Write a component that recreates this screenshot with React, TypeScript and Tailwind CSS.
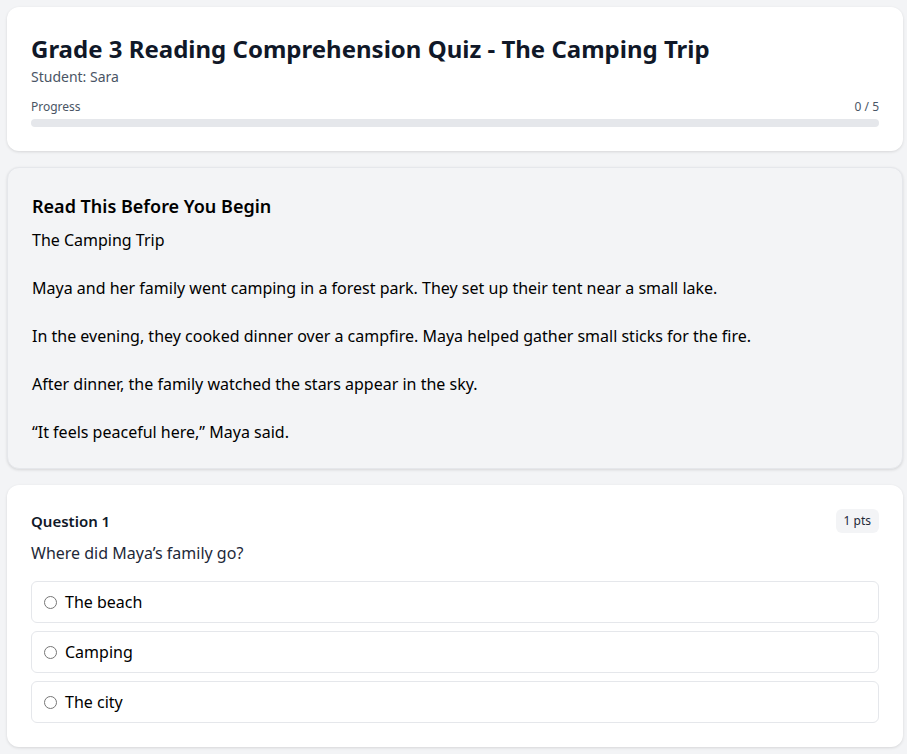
const passage = `The Camping Trip

Maya and her family went camping in a forest park. They set up their tent near a small lake.

In the evening, they cooked dinner over a campfire. Maya helped gather small sticks for the fire.

After dinner, the family watched the stars appear in the sky.

“It feels peaceful here,” Maya said.`;

const options = ['The beach', 'Camping', 'The city'];

export default function App() {
  return (
    <div
      className="min-h-screen bg-[#f3f4f6] pt-[7px] pr-[4px] pb-2 pl-[7px] text-gray-900"
      style={{ fontFamily: '"Noto Sans", "Open Sans", sans-serif' }}
    >
      <div className="flex flex-col gap-4">
        <div className="rounded-xl bg-white p-6 shadow-[0_1px_3px_rgba(0,0,0,0.12)]">
          <h1 className="text-2xl leading-9 font-bold text-gray-900">
            Grade 3 Reading Comprehension Quiz - The Camping Trip
          </h1>
          <p className="text-sm leading-5 text-gray-600">Student: Sara</p>
          <div className="mt-3">
            <div className="flex justify-between text-xs leading-4 text-gray-600">
              <span>Progress</span>
              <span>0 / 5</span>
            </div>
            <div className="mt-1 h-2 rounded-full bg-gray-200" />
          </div>
        </div>

        <div className="rounded-xl border border-gray-200 bg-[#f3f4f6] p-6 shadow-[0_1px_3px_rgba(0,0,0,0.12)]">
          <h2 className="text-lg leading-7 font-semibold text-black">Read This Before You Begin</h2>
          <p className="mt-2 text-base leading-6 whitespace-pre-line text-black">{passage}</p>
        </div>

        <div className="rounded-xl bg-white p-6 shadow-[0_1px_3px_rgba(0,0,0,0.12)]">
          <div className="flex items-center justify-between">
            <h3 className="text-[15px] leading-6 font-semibold text-gray-900">Question 1</h3>
            <span className="rounded-md bg-gray-100 px-2 py-1 text-xs leading-4 text-gray-800">1 pts</span>
          </div>
          <p className="mt-2 text-base leading-6 text-gray-800">Where did Maya’s family go?</p>
          <div className="mt-4 flex flex-col gap-2">
            {options.map((o) => (
              <label
                key={o}
                className="flex items-center gap-2 rounded-md border border-gray-200 px-3 py-2 text-base leading-6 text-black"
              >
                <input type="radio" name="q1" className="m-0 h-[13px] w-[13px]" />
                <span>{o}</span>
              </label>
            ))}
          </div>
        </div>
      </div>
    </div>
  );
}
